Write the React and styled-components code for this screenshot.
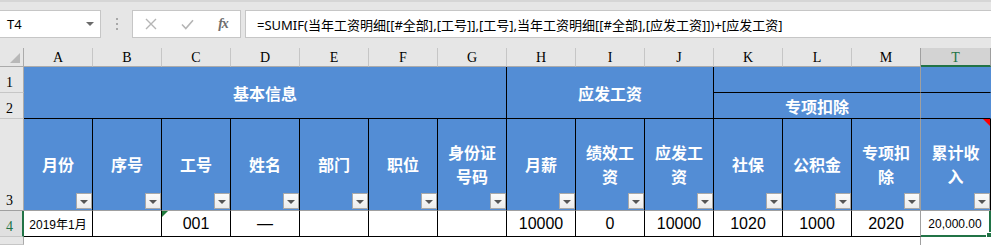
import React from 'react';
import styled, { createGlobalStyle } from 'styled-components';

const GlobalStyle = createGlobalStyle`
  html, body { margin: 0; padding: 0; background: #fff; }
  body { font-family: "Liberation Sans", "Noto Sans CJK SC", sans-serif; }
  *, *::before, *::after { box-sizing: border-box; }
`;

const BLUE = '#538dd5';
const GREEN = '#217346';
const FREEZE = '#a0a0a0';

const Page = styled.div`
  width: 991px;
  height: 245px;
  overflow: hidden;
  display: flex;
  flex-direction: column;
  background: #fff;
`;

const Toolbar = styled.div`
  height: 48px;
  flex: none;
  background: #e6e6e6;
  border-top: 2px solid #d6d6d6;
  padding-top: 8px;
  display: flex;
  align-items: flex-start;
`;

const NameBox = styled.div`
  width: 101px;
  height: 28px;
  background: #fff;
  border: 1px solid #c6c6c6;
  border-left: none;
  display: flex;
  align-items: center;
  justify-content: space-between;
  padding: 0 6px 0 7px;
  font: 13px "Noto Sans", "Noto Sans CJK SC", sans-serif;
  color: #000;
`;

const DropArrow = styled.span`
  width: 0;
  height: 0;
  border-left: 4px solid transparent;
  border-right: 4px solid transparent;
  border-top: 4px solid #6a6a6a;
`;

const Grip = styled.div`
  width: 31px;
  height: 28px;
  display: flex;
  flex-direction: column;
  align-items: center;
  justify-content: center;
  gap: 3px;
`;

const GripDot = styled.span`
  width: 2px;
  height: 2px;
  background: #a8a8a8;
`;

const FxBox = styled.div`
  width: 109px;
  height: 28px;
  background: #fff;
  border: 1px solid #c6c6c6;
  display: grid;
  grid-template-columns: repeat(3, 36px);
  align-items: center;
  justify-items: center;
  padding-left: 0;
`;

const FxLabel = styled.span`
  font: italic bold 14px "Liberation Serif", serif;
  color: #6e6e6e;
  letter-spacing: -1px;
`;

const FormulaInput = styled.div`
  flex: 1;
  margin-left: 4px;
  height: 28px;
  background: #fff;
  border: 1px solid #c6c6c6;
  border-right: none;
  display: flex;
  align-items: center;
  padding-left: 11px;
  font: 13px "Noto Sans", "Noto Sans CJK SC", sans-serif;
  color: #000;
  white-space: nowrap;
  overflow: hidden;
`;

const Sheet = styled.div`
  flex: 1;
  display: grid;
  grid-template-columns: 24px repeat(13, 69px) 1fr;
  grid-template-rows: 19px 26px 26px 92px 26px 1fr;
`;

const Corner = styled.div`
  position: relative;
  background: #e6e6e6;
  border-right: 1px solid #ababab;
  border-bottom: 1px solid #ababab;
  &::after {
    content: '';
    position: absolute;
    right: 3px;
    bottom: 3px;
    border-left: 10px solid transparent;
    border-bottom: 10px solid #b8b8b8;
  }
`;

const ColHead = styled.div`
  background: ${p => (p.$active ? '#d3d3d3' : '#e6e6e6')};
  border-right: 1px solid ${p => (p.$freeze ? FREEZE : p.$active ? '#9e9e9e' : '#c6c6c6')};
  border-bottom: ${p => (p.$active ? `2px solid ${GREEN}` : '1px solid #ababab')};
  color: ${p => (p.$active ? GREEN : '#000')};
  font: 14px "Liberation Serif", serif;
  display: flex;
  align-items: center;
  justify-content: center;
  padding-top: ${p => (p.$active ? '3px' : '2px')};
`;

const RowHead = styled.div`
  grid-column: 1;
  grid-row: ${p => p.$row};
  background: ${p => (p.$active ? '#e0e0e0' : '#e6e6e6')};
  border-right: ${p => (p.$active ? `2px solid ${GREEN}` : '1px solid #ababab')};
  border-bottom: 1px solid ${p => p.$edge || '#c6c6c6'};
  color: ${p => (p.$active ? GREEN : '#000')};
  font: 14px "Liberation Serif", serif;
  display: flex;
  align-items: flex-end;
  padding: 0 0 1px 6px;
`;

const Band = styled.div`
  grid-column: ${p => p.$col};
  grid-row: ${p => p.$row};
  background: ${BLUE};
  border-right: 1px solid ${p => p.$right || 'transparent'};
  border-bottom: 1px solid ${p => p.$bottom || 'transparent'};
  color: #fff;
  font: bold 16px "Noto Sans CJK SC", sans-serif;
  display: flex;
  align-items: center;
  justify-content: center;
`;

const FieldHead = styled.div`
  position: relative;
  background: ${BLUE};
  border-right: 1px solid ${p => (p.$freeze ? FREEZE : '#000')};
  border-bottom: 1px solid ${FREEZE};
  color: #fff;
  font: bold 16px/24px "Noto Sans CJK SC", sans-serif;
  display: flex;
  align-items: center;
  justify-content: center;
  text-align: center;
  white-space: pre-line;
  padding-bottom: 1px;
  ${p =>
    p.$note &&
    `&::before {
      content: '';
      position: absolute;
      top: 0;
      right: 0;
      border-top: 7px solid #ff0000;
      border-left: 7px solid transparent;
    }`}
`;

const FilterBtn = styled.span`
  position: absolute;
  right: 0;
  bottom: 1px;
  width: 16px;
  height: 16px;
  background: linear-gradient(#fbfbfb, #ececec);
  border: 1px solid #a9a9a9;
  display: flex;
  align-items: center;
  justify-content: center;
  &::after {
    content: '';
    margin-top: 1px;
    border-left: 4px solid transparent;
    border-right: 4px solid transparent;
    border-top: 4px solid #555;
  }
`;

const DataCell = styled.div`
  position: relative;
  background: #fff;
  border-right: ${p =>
    p.$selected ? `2px solid ${GREEN}` : `1px solid ${p.$freeze ? FREEZE : '#000'}`};
  border-bottom: ${p => (p.$selected ? `2px solid ${GREEN}` : '1px solid #000')};
  color: #000;
  font-family: "Liberation Sans", "Noto Sans CJK SC", sans-serif;
  font-size: ${p => (p.$small ? '12px' : '16px')};
  display: flex;
  align-items: center;
  justify-content: center;
  padding-top: ${p => (p.$selected ? '1px' : '0')};
  white-space: nowrap;
  ${p =>
    p.$flag &&
    `&::before {
      content: '';
      position: absolute;
      top: 0;
      left: 0;
      border-top: 6px solid #1f7a3c;
      border-right: 6px solid transparent;
    }`}
`;

const FillHandle = styled.span`
  position: absolute;
  right: -3px;
  bottom: -3px;
  width: 6px;
  height: 6px;
  background: ${GREEN};
  border: 1px solid #fff;
`;

const Blank = styled.div`
  grid-column: ${p => p.$col};
  grid-row: 6;
  background: #fff;
  border-right: ${p => (p.$freeze ? `1px solid ${FREEZE}` : 'none')};
`;

const columns = ['A', 'B', 'C', 'D', 'E', 'F', 'G', 'H', 'I', 'J', 'K', 'L', 'M', 'T'];

const fields = [
  '月份', '序号', '工号', '姓名', '部门', '职位', '身份证\n号码',
  '月薪', '绩效工\n资', '应发工\n资', '社保', '公积金', '专项扣\n除', '累计收\n入',
];

const values = [
  { v: '2019年1月', small: true },
  { v: '' },
  { v: '001', flag: true },
  { v: '—' },
  { v: '' },
  { v: '' },
  { v: '' },
  { v: '10000' },
  { v: '0' },
  { v: '10000' },
  { v: '1020' },
  { v: '1000' },
  { v: '2020' },
  { v: '20,000.00', small: true, selected: true },
];

const CrossIcon = () => (
  <svg width="12" height="12" viewBox="0 0 12 12">
    <path d="M1 1 L11 11 M11 1 L1 11" stroke="#b5b5b5" strokeWidth="1.4" fill="none" />
  </svg>
);

const CheckIcon = () => (
  <svg width="13" height="11" viewBox="0 0 13 11">
    <path d="M1 5.5 L4.8 9.5 L12 1.2" stroke="#b5b5b5" strokeWidth="1.6" fill="none" />
  </svg>
);

export default function App() {
  const freezeIdx = 12;
  return (
    <Page>
      <GlobalStyle />
      <Toolbar>
        <NameBox>
          T4
          <DropArrow />
        </NameBox>
        <Grip>
          <GripDot />
          <GripDot />
          <GripDot />
        </Grip>
        <FxBox>
          <CrossIcon />
          <CheckIcon />
          <FxLabel>fx</FxLabel>
        </FxBox>
        <FormulaInput>
          =SUMIF(当年工资明细[[#全部],[工号]],[工号],当年工资明细[[#全部],[应发工资]])+[应发工资]
        </FormulaInput>
      </Toolbar>
      <Sheet>
        <Corner />
        {columns.map((c, i) => (
          <ColHead key={c} $active={c === 'T'} $freeze={i === freezeIdx}>
            {c}
          </ColHead>
        ))}

        <RowHead $row={2}>1</RowHead>
        <RowHead $row={3}>2</RowHead>
        <RowHead $row={4} $edge={FREEZE}>3</RowHead>
        <RowHead $row={5} $active>4</RowHead>
        <RowHead $row={6} />

        <Band $col="2 / 9" $row="2 / 4" $right="#000" $bottom="#000">基本信息</Band>
        <Band $col="9 / 12" $row="2 / 4" $right="#000" $bottom="#000">应发工资</Band>
        <Band $col="12 / 15" $row="2" $right={FREEZE} $bottom="#000" />
        <Band $col="12 / 15" $row="3" $right={FREEZE} $bottom="#000">专项扣除</Band>
        <Band $col="15" $row="2" $bottom="#000" />
        <Band $col="15" $row="3" $bottom="#000" />

        {fields.map((f, i) => (
          <FieldHead
            key={f}
            style={{ gridColumn: i + 2, gridRow: 4 }}
            $freeze={i === freezeIdx}
            $note={i === 13}
          >
            {f}
            <FilterBtn />
          </FieldHead>
        ))}

        {values.map((d, i) => (
          <DataCell
            key={i}
            style={{ gridColumn: i + 2, gridRow: 5 }}
            $freeze={i === freezeIdx}
            $small={d.small}
            $flag={d.flag}
            $selected={d.selected}
          >
            {d.v}
            {d.selected && <FillHandle />}
          </DataCell>
        ))}

        <Blank $col="2 / 15" $freeze />
        <Blank $col="15" />
      </Sheet>
    </Page>
  );
}
